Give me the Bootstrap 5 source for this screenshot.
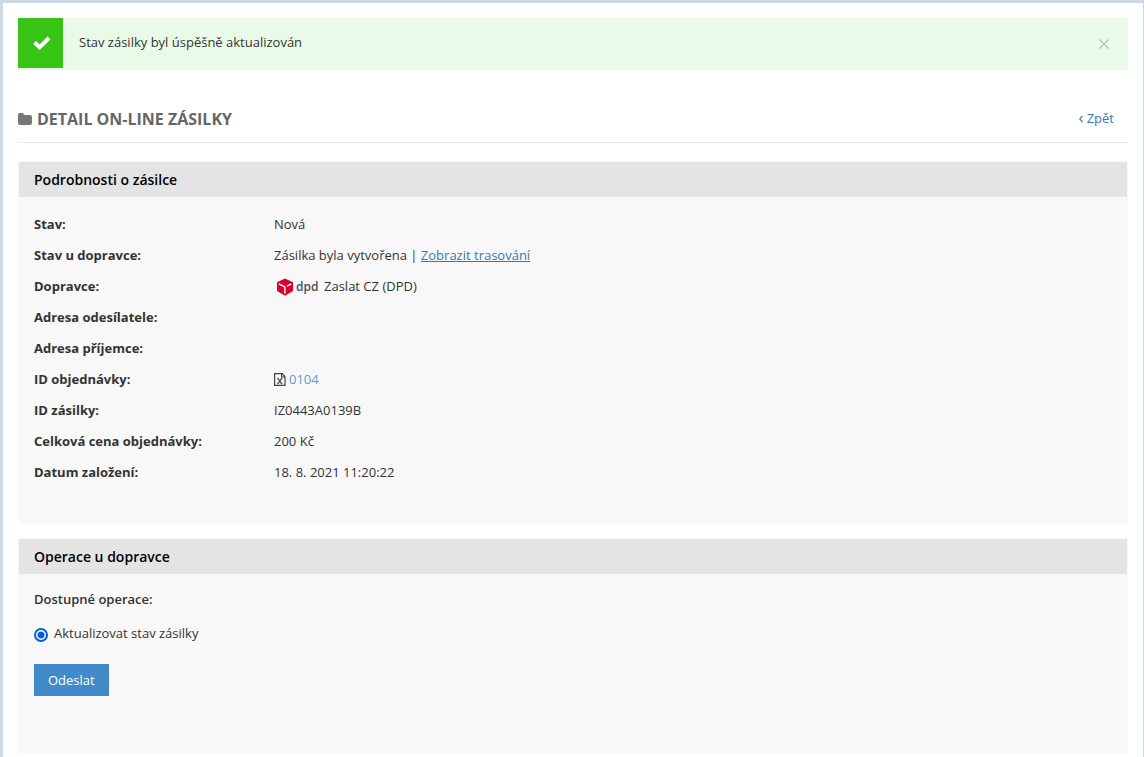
<!DOCTYPE html>
<html lang="cs">
<head>
<meta charset="utf-8">
<meta name="viewport" content="width=device-width, initial-scale=1">
<title>Detail on-line zásilky</title>
<link href="https://cdn.jsdelivr.net/npm/bootstrap@5.3.0/dist/css/bootstrap.min.css" rel="stylesheet">
<style>
  body { font-family: "Open Sans", "Noto Sans", sans-serif; font-size: 13px; line-height: 19px; color: #333; background: #fff; }
  a { color: #337ab7; }
  .page-frame { border: solid #cdd7e6; border-width: 3px 1px 0 3px; padding: 15px 15px 4px; min-height: 100vh; }
  .notice { background: #e9fbe8; border: 0; border-radius: 0; color: #333; min-height: 52px; }
  .notice-icon { width: 45px; height: 50px; background: #37c415; }
  .notice-text { padding: 15px 16px; }
  .notice .close-btn { border: 0; background: none; padding: 4px; line-height: 0; color: #b5c4b5; margin-right: 15px; }
  .page-head { margin-top: 25px; padding: 12px 14px 11px 0; border-bottom: 1px solid #e9e9e9; }
  .page-head h1 { font-size: 16px; line-height: 24px; font-weight: 700; color: #666; text-transform: uppercase; gap: 5px; }
  .back-link { padding-top: 2px; }
  .panels { padding-top: 18px; gap: 15px; }
  .panel { border: 1px solid #f8f8f8; border-radius: 0; background: #f8f8f8; color: inherit; }
  .panel > .card-header { background: #e4e4e4; border: 0; border-radius: 0; padding: 8px 15px; color: #000; }
  .panel h2 { font-size: 14px; line-height: 19px; font-weight: 600; margin: 0; }
  .panel > .card-body { padding: 12px 15px 34px; }
  .details dt, .details dd { line-height: 31px; margin: 0; }
  .details dt { flex: 0 0 240px; font-weight: 700; }
  .dpd-name { font: 600 12px "Open Sans", sans-serif; fill: #505050; }
  .order-link { color: #5f9bd1; gap: 3px; }
  .panel > .card-body.operations { padding: 16px 15px 56px; }
  .op-legend { font-size: 13px; line-height: 19px; font-weight: 600; margin-bottom: 15px; }
  .op-choice { gap: 6px; margin-bottom: 21px; }
  .op-radio { appearance: none; width: 14px; height: 14px; margin: 4px 0 0; border: 2px solid #767676; border-radius: 50%; background: #fff; }
  .op-radio:checked { border-color: #0060df; background: radial-gradient(circle, #0060df 3px, #fff 4px); }
  .btn-send { --bs-btn-color: #fff; --bs-btn-bg: #428bca; --bs-btn-border-color: #428bca; --bs-btn-hover-color: #fff; --bs-btn-hover-bg: #3276b1; --bs-btn-hover-border-color: #3276b1; --bs-btn-font-size: 13px; --bs-btn-border-radius: 0; --bs-btn-padding-x: 13px; --bs-btn-padding-y: 6px; line-height: 18px; }
</style>
</head>
<body>
<main class="page-frame">
  <div class="alert notice d-flex align-items-start p-0 mb-0" role="alert">
    <div class="notice-icon d-flex align-items-center justify-content-center flex-shrink-0">
      <svg width="20" height="16" viewBox="0 0 20 16" aria-hidden="true"><path d="M3.5 7.5 8.7 12.2 18 3" fill="none" stroke="#fff" stroke-width="4"/></svg>
    </div>
    <div class="notice-text flex-grow-1">Stav zásilky byl úspěšně aktualizován</div>
    <button type="button" class="close-btn align-self-center" data-bs-dismiss="alert" aria-label="Zavřít">
      <svg width="10" height="10" viewBox="0 0 10 10" aria-hidden="true"><path d="m.5.5 9 9m0-9-9 9" stroke="currentColor" stroke-width="1.4"/></svg>
    </button>
  </div>

  <header class="page-head d-flex justify-content-between align-items-start">
    <h1 class="d-flex align-items-center mb-0">
      <svg width="14" height="12" viewBox="0 0 14 12" aria-hidden="true"><path d="M0 2Q0 0 2 0h2.2Q6 0 6 2h6q2 0 2 2v6q0 2-2 2H2q-2 0-2-2z" fill="#777"/></svg>
      Detail on-line zásilky
    </h1>
    <a href="#" class="back-link text-decoration-none d-flex align-items-center gap-1">
      <svg width="4" height="8" viewBox="0 0 4 8" aria-hidden="true"><path d="M3.6.8.8 4l2.8 3.2" fill="none" stroke="currentColor" stroke-width="1.2"/></svg>
      Zpět
    </a>
  </header>

  <div class="panels d-flex flex-column">
  <section class="card panel">
    <div class="card-header"><h2>Podrobnosti o zásilce</h2></div>
    <div class="card-body">
      <dl class="details mb-0">
        <div class="d-flex"><dt>Stav:</dt><dd>Nová</dd></div>
        <div class="d-flex"><dt>Stav u dopravce:</dt><dd>Zásilka byla vytvořena | <a href="#">Zobrazit trasování</a></dd></div>
        <div class="d-flex"><dt>Dopravce:</dt>
          <dd class="d-flex align-items-center">
            <svg class="me-1" width="46" height="20" viewBox="0 0 46 20" role="img" aria-label="DPD">
              <path d="M11 1.5 19 5.3V14l-8 4.7L3 14V5.3z" fill="#dc0032"/>
              <path d="M4.8 6.8 10.9 10v6.5M17.2 6.8 13 9.1" fill="none" stroke="#fff" stroke-width="1.4"/>
              <text class="dpd-name" x="22" y="14">dpd</text>
            </svg>
            Zaslat CZ (DPD)
          </dd></div>
        <div class="d-flex"><dt>Adresa odesílatele:</dt><dd></dd></div>
        <div class="d-flex"><dt>Adresa příjemce:</dt><dd></dd></div>
        <div class="d-flex"><dt>ID objednávky:</dt>
          <dd><a href="#" class="order-link text-decoration-none d-flex align-items-center">
            <svg width="12" height="13" viewBox="0 0 12 13" aria-hidden="true"><path d="M.6.6H8l3 3v8.8H.6zM7.6.8V4H11" fill="none" stroke="#444" stroke-width="1.2"/><path d="m3.9 5.6 3.8 5m0-5-3.8 5" fill="none" stroke="#444" stroke-width="1.2"/><path d="M3 5.5h1.8m2 0h1.8M3 10.7h1.8m2 0h1.8" fill="none" stroke="#444" stroke-width=".8"/></svg>
            0104</a></dd></div>
        <div class="d-flex"><dt>ID zásilky:</dt><dd>IZ0443A0139B</dd></div>
        <div class="d-flex"><dt>Celková cena objednávky:</dt><dd>200 Kč</dd></div>
        <div class="d-flex"><dt>Datum založení:</dt><dd>18. 8. 2021 11:20:22</dd></div>
      </dl>
    </div>
  </section>

  <section class="card panel">
    <div class="card-header"><h2>Operace u dopravce</h2></div>
    <div class="card-body operations">
      <form>
        <fieldset>
          <legend class="op-legend float-none">Dostupné operace:</legend>
          <div class="op-choice d-flex align-items-start">
            <input class="op-radio" type="radio" name="op" id="op-update" checked>
            <label for="op-update">Aktualizovat stav zásilky</label>
          </div>
        </fieldset>
        <button type="submit" class="btn btn-send">Odeslat</button>
      </form>
    </div>
  </section>
  </div>
</main>
<script src="https://cdn.jsdelivr.net/npm/bootstrap@5.3.0/dist/js/bootstrap.bundle.min.js"></script>
</body>
</html>
